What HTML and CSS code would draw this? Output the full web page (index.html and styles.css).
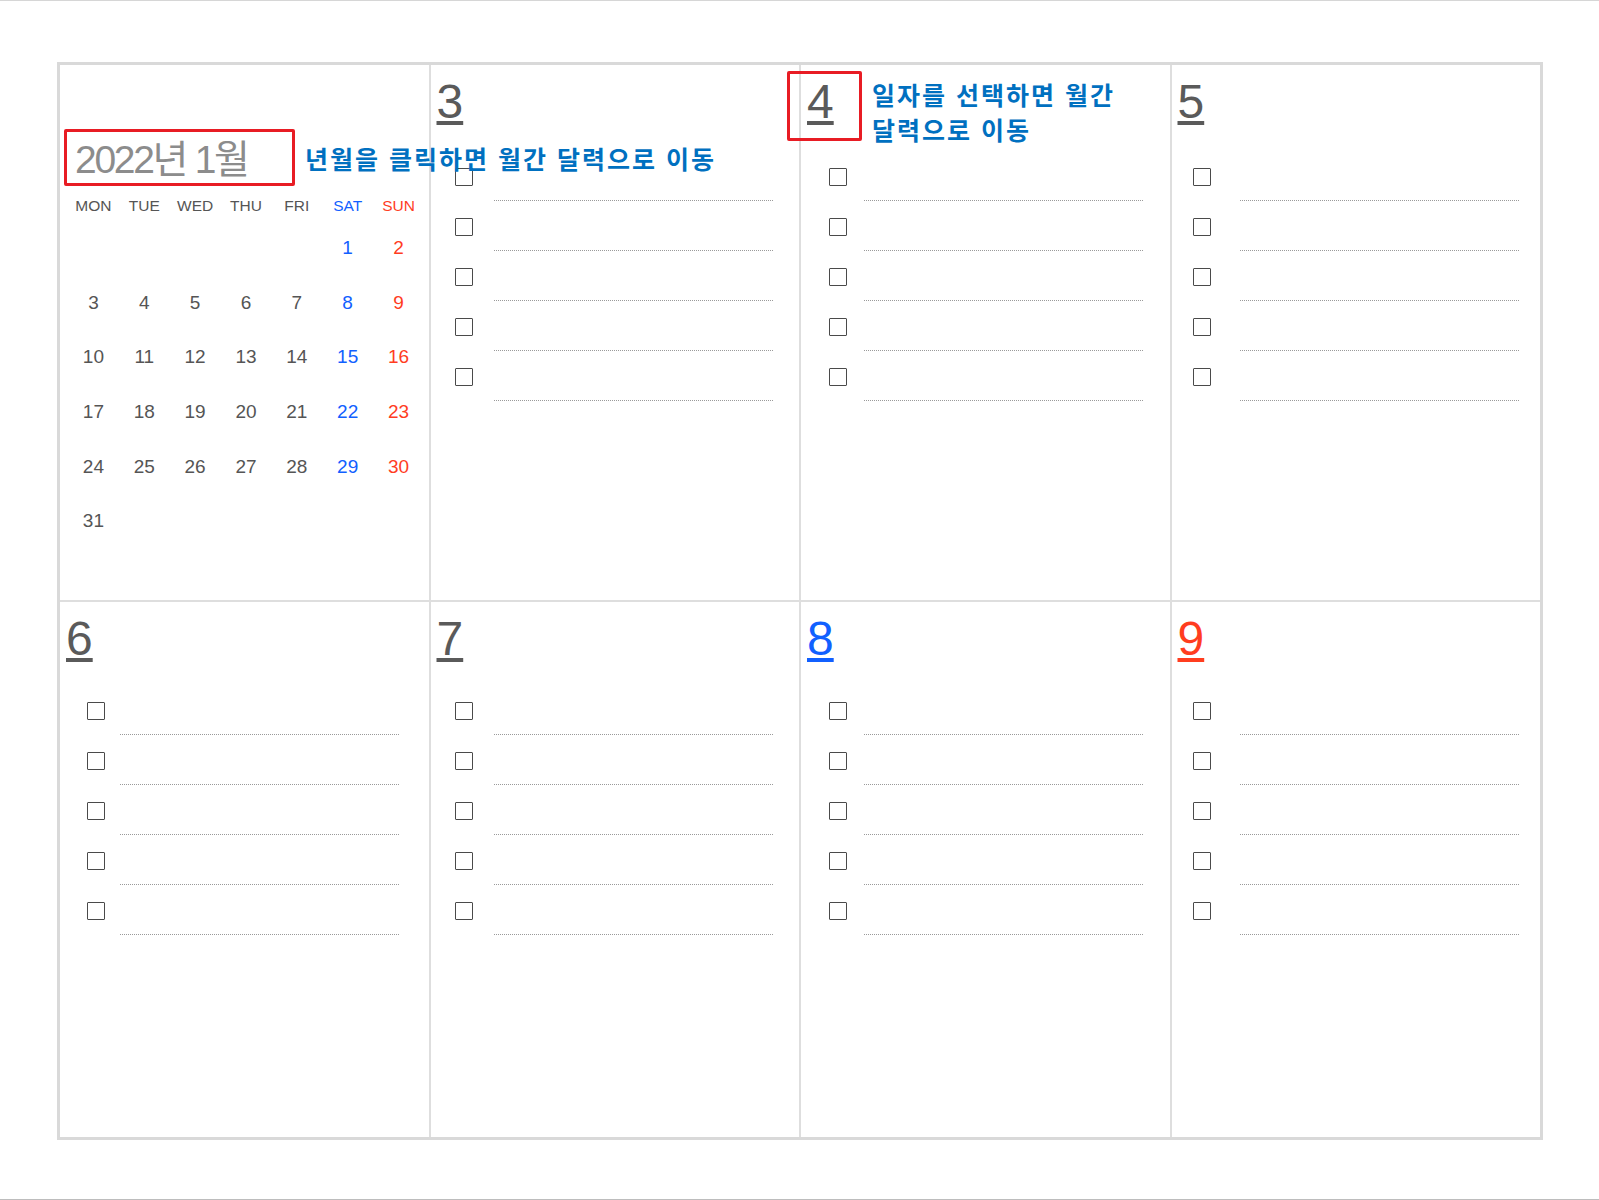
FILE: index.html
```html
<!DOCTYPE html>
<html lang="ko">
<head>
    <meta charset="UTF-8">
    <meta name="viewport" content="width=device-width, initial-scale=1.0">
    <title>주간 플래너 - 2022년 1월</title>
    <link rel="stylesheet" href="styles.css">
</head>
<body>
    <div class="page">
        <div class="planner">

            <!-- 월간 미니 달력 -->
            <div class="cell month-cell">
                <a class="month-title" href="#">2022년 1월</a>
                <table class="mini-cal">
                    <thead>
                        <tr>
                            <th>MON</th><th>TUE</th><th>WED</th><th>THU</th><th>FRI</th>
                            <th class="sat">SAT</th><th class="sun">SUN</th>
                        </tr>
                    </thead>
                    <tbody>
                        <tr><td></td><td></td><td></td><td></td><td></td><td class="sat">1</td><td class="sun">2</td></tr>
                        <tr><td>3</td><td>4</td><td>5</td><td>6</td><td>7</td><td class="sat">8</td><td class="sun">9</td></tr>
                        <tr><td>10</td><td>11</td><td>12</td><td>13</td><td>14</td><td class="sat">15</td><td class="sun">16</td></tr>
                        <tr><td>17</td><td>18</td><td>19</td><td>20</td><td>21</td><td class="sat">22</td><td class="sun">23</td></tr>
                        <tr><td>24</td><td>25</td><td>26</td><td>27</td><td>28</td><td class="sat">29</td><td class="sun">30</td></tr>
                        <tr><td>31</td><td></td><td></td><td></td><td></td><td></td><td></td></tr>
                    </tbody>
                </table>
            </div>

            <!-- 일자별 할 일 -->
            <div class="cell day">
                <a class="day-num" href="#">3</a>
                <ul class="todo">
                    <li><span class="check"></span><span class="line"></span></li>
                    <li><span class="check"></span><span class="line"></span></li>
                    <li><span class="check"></span><span class="line"></span></li>
                    <li><span class="check"></span><span class="line"></span></li>
                    <li><span class="check"></span><span class="line"></span></li>
                </ul>
            </div>
            <div class="cell day">
                <a class="day-num" href="#">4</a>
                <ul class="todo">
                    <li><span class="check"></span><span class="line"></span></li>
                    <li><span class="check"></span><span class="line"></span></li>
                    <li><span class="check"></span><span class="line"></span></li>
                    <li><span class="check"></span><span class="line"></span></li>
                    <li><span class="check"></span><span class="line"></span></li>
                </ul>
            </div>
            <div class="cell day">
                <a class="day-num" href="#">5</a>
                <ul class="todo">
                    <li><span class="check"></span><span class="line"></span></li>
                    <li><span class="check"></span><span class="line"></span></li>
                    <li><span class="check"></span><span class="line"></span></li>
                    <li><span class="check"></span><span class="line"></span></li>
                    <li><span class="check"></span><span class="line"></span></li>
                </ul>
            </div>
            <div class="cell day">
                <a class="day-num" href="#">6</a>
                <ul class="todo">
                    <li><span class="check"></span><span class="line"></span></li>
                    <li><span class="check"></span><span class="line"></span></li>
                    <li><span class="check"></span><span class="line"></span></li>
                    <li><span class="check"></span><span class="line"></span></li>
                    <li><span class="check"></span><span class="line"></span></li>
                </ul>
            </div>
            <div class="cell day">
                <a class="day-num" href="#">7</a>
                <ul class="todo">
                    <li><span class="check"></span><span class="line"></span></li>
                    <li><span class="check"></span><span class="line"></span></li>
                    <li><span class="check"></span><span class="line"></span></li>
                    <li><span class="check"></span><span class="line"></span></li>
                    <li><span class="check"></span><span class="line"></span></li>
                </ul>
            </div>
            <div class="cell day">
                <a class="day-num sat" href="#">8</a>
                <ul class="todo">
                    <li><span class="check"></span><span class="line"></span></li>
                    <li><span class="check"></span><span class="line"></span></li>
                    <li><span class="check"></span><span class="line"></span></li>
                    <li><span class="check"></span><span class="line"></span></li>
                    <li><span class="check"></span><span class="line"></span></li>
                </ul>
            </div>
            <div class="cell day">
                <a class="day-num sun" href="#">9</a>
                <ul class="todo">
                    <li><span class="check"></span><span class="line"></span></li>
                    <li><span class="check"></span><span class="line"></span></li>
                    <li><span class="check"></span><span class="line"></span></li>
                    <li><span class="check"></span><span class="line"></span></li>
                    <li><span class="check"></span><span class="line"></span></li>
                </ul>
            </div>

            <!-- 안내 표시 -->
            <div class="mark mark-month"></div>
            <p class="note note-month">년월을 클릭하면 월간 달력으로 이동</p>
            <div class="mark mark-day"></div>
            <p class="note note-day">일자를 선택하면 월간<br>달력으로 이동</p>
        </div>
    </div>
</body>
</html>
```

FILE: styles.css
```css
html, body {
    margin: 0;
    padding: 0;
    background: #ffffff;
}
body {
    font-family: "Liberation Sans", "Noto Sans CJK KR", Arial, sans-serif;
    color: #555;
}
a {
    color: inherit;
}
.page {
    height: 1200px;
    box-sizing: border-box;
    border-top: 1px solid #d6d6d6;
    border-bottom: 1px solid #bdbdbd;
    padding: 61px 0 0 57px;
}
.planner {
    position: relative;
    width: 1486px;
    box-sizing: border-box;
    display: grid;
    grid-template-columns: repeat(4, 1fr);
    grid-template-rows: 535px 535px;
    gap: 2px;
    background-color: #dedede;
    border: 3px solid #d9d9d9;
}
.cell {
    background-color: #ffffff;
}
/* 미니 달력 */
.month-cell {
    padding: 72px 0 0 15px;
}
.month-title {
    display: block;
    font-size: 39px;
    line-height: 45px;
    letter-spacing: -2.3px;
    color: #8c8c8c;
    text-decoration: none;
}
.mini-cal {
    margin: 8px 0 0 -7px;
    width: 356px;
    border-collapse: collapse;
    table-layout: fixed;
}
.mini-cal th {
    height: 31px;
    padding: 0;
    font-size: 15.5px;
    font-weight: normal;
    text-align: center;
}
.mini-cal td {
    height: 54.6px;
    padding: 0;
    font-size: 19px;
    text-align: center;
}
.sat {
    color: #1160ff;
}
.sun {
    color: #ff3d1f;
}
/* 일자 칸 */
.day {
    padding: 9px 6px 0;
}
.day-num {
    font-size: 48px;
    line-height: 55px;
    text-decoration: underline;
    color: #5a5a5a;
}
.day-num.sat {
    color: #1160ff;
}
.day-num.sun {
    color: #ff3d1f;
}
.todo {
    list-style: none;
    margin: 22px 0 0;
    padding: 0 0 0 18px;
}
.day:nth-child(n+5) .todo {
    margin-top: 19px;
}
.todo li {
    display: flex;
    height: 50px;
}
.check {
    flex: none;
    width: 18px;
    height: 18px;
    box-sizing: border-box;
    margin-top: 17px;
    border: 1px solid #4a4a4a;
    border-radius: 1px;
}
.line {
    flex: none;
    width: 279px;
    height: 50px;
    box-sizing: border-box;
    margin-left: 21px;
    border-bottom: 1px dotted #9a9a9a;
}
.day:nth-child(4n+1) .todo { padding-left: 21px; }
.day:nth-child(4n+1) .line { margin-left: 15px; }
.day:nth-child(4n+3) .todo { padding-left: 22px; }
.day:nth-child(4n+3) .line { margin-left: 17px; }
.day:nth-child(4n) .todo { padding-left: 15px; }
.day:nth-child(4n) .line { margin-left: 29px; }
/* 안내 표시 (빨간 박스 + 파란 설명) */
.mark {
    position: absolute;
    box-sizing: border-box;
    border: 3px solid #e81c24;
    border-radius: 2px;
}
.mark-month {
    left: 4px;
    top: 64px;
    width: 231px;
    height: 57px;
}
.mark-day {
    left: 727px;
    top: 6px;
    width: 75px;
    height: 70px;
}
.note {
    position: absolute;
    margin: 0;
    font-family: "Noto Sans CJK KR", sans-serif;
    font-size: 25px;
    font-weight: bold;
    letter-spacing: 2px;
    color: #0070c0;
    white-space: nowrap;
}
.note-month {
    left: 245px;
    top: 75px;
    line-height: 36px;
}
.note-day {
    left: 812px;
    top: 12px;
    line-height: 35px;
}
```
